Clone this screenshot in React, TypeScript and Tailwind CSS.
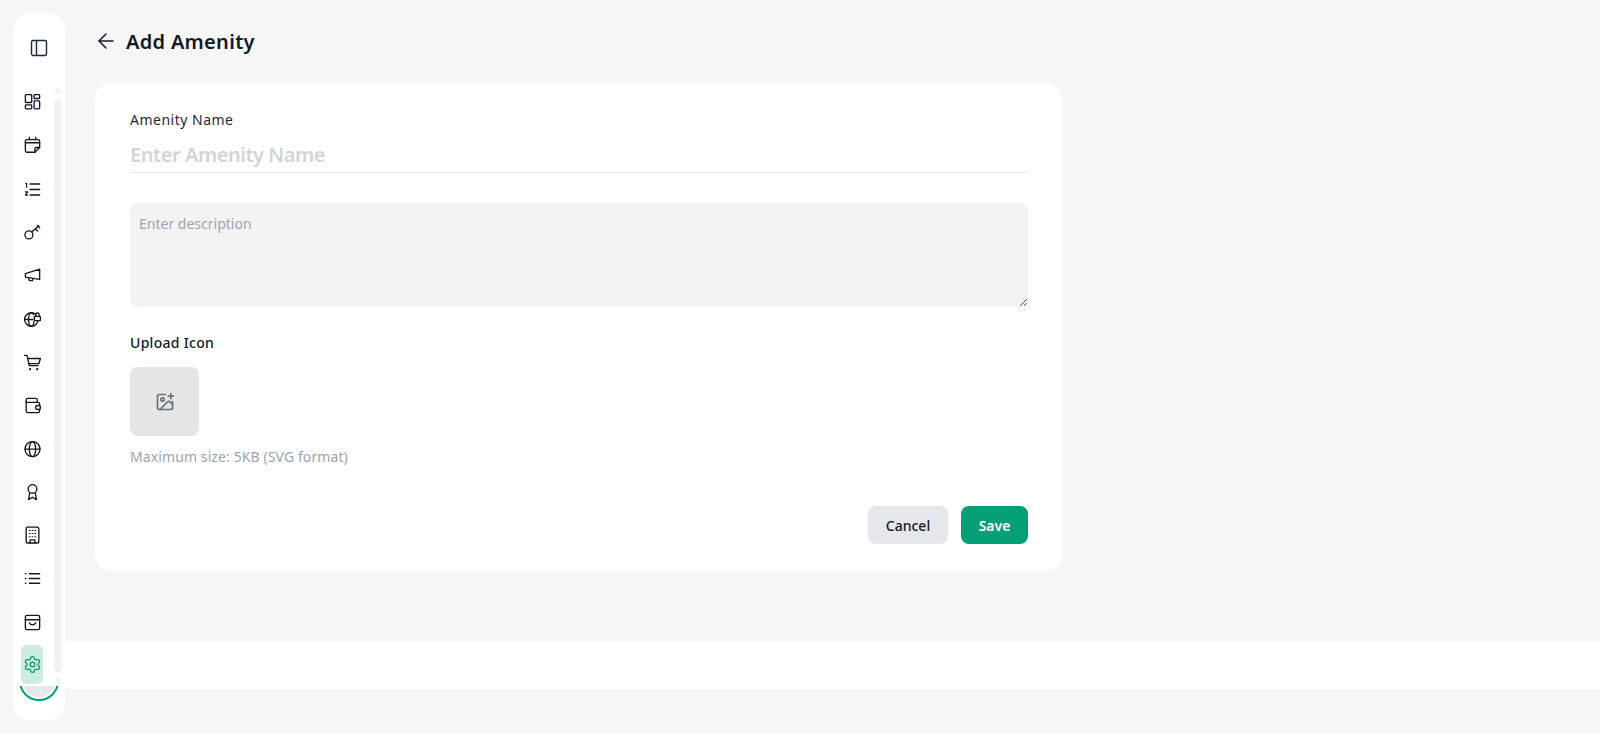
import React from "react";
import { ArrowLeft, Settings, ImagePlus } from "lucide-react";

const NavSvg = ({ children }: { children: React.ReactNode }) => (
  <svg
    viewBox="0 0 24 24"
    fill="none"
    stroke="#111827"
    strokeWidth={1.7}
    strokeLinecap="round"
    strokeLinejoin="round"
    className="h-[19px] w-[19px]"
  >
    {children}
  </svg>
);

const navIcons = [
  // dashboard
  <>
    <rect x="3" y="2" width="8" height="10" rx="1" />
    <rect x="3" y="15" width="8" height="5" rx="1" />
    <rect x="14" y="2" width="7" height="5" rx="1" />
    <rect x="14" y="10" width="7" height="10" rx="1" />
  </>,
  // calendar note
  <>
    <path d="M8 1.5v3M16 1.5v3" />
    <path d="M5 4.5h14a2 2 0 0 1 2 2v8l-6 6H5a2 2 0 0 1-2-2v-12a2 2 0 0 1 2-2z" />
    <path d="M21 14.5h-4a2 2 0 0 0-2 2v4" />
    <path d="M3 8.5h18" />
  </>,
  // numbered list
  <>
    <path d="M9 5h12M9 12h12M9 19h12" />
    <path d="M3.5 4.5l1-.5v5" strokeWidth={1.5} />
    <path d="M3 15h3l-3 4h3" strokeWidth={1.5} />
  </>,
  // key
  <>
    <circle cx="7.5" cy="15" r="5" />
    <path d="M11 11.5l9-8" />
    <path d="M16 7.5l2.5 2.5M18 3l3 3" />
  </>,
  // megaphone
  <>
    <path d="M3 9.5L21 4v13L3 14z" />
    <path d="M7 15l1 3.5h4l.6-2.5" />
  </>,
  // globe with lock
  <>
    <circle cx="10.5" cy="12" r="8.5" />
    <ellipse cx="10.5" cy="12" rx="3.5" ry="8.5" />
    <path d="M2 12h17" />
    <rect x="13" y="6" width="10" height="8" fill="#ffffff" stroke="none" />
    <rect x="14.5" y="8" width="7.5" height="5.5" rx="1" />
    <path d="M16 8V6a2.2 2.2 0 0 1 4.4 0v2" />
  </>,
  // cart
  <>
    <path d="M2 3h3l3 13h11" />
    <path d="M6 7h16l-2 6.5H7.5" />
    <circle cx="9" cy="20.5" r="0.6" />
    <circle cx="18" cy="20.5" r="0.6" />
  </>,
  // wallet
  <>
    <path d="M4 8V5a2 2 0 0 1 2-2h10a2 2 0 0 1 2 2v3" />
    <path d="M4 7v12a2 2 0 0 0 2 2h13a2 2 0 0 0 2-2V10a2 2 0 0 0-2-2H5" />
    <rect x="16" y="12" width="6" height="5" rx="2.5" fill="#ffffff" />
  </>,
  // globe
  <>
    <circle cx="12" cy="11.5" r="9.5" />
    <ellipse cx="12" cy="11.5" rx="4" ry="9.5" />
    <path d="M2.5 11.5h19" />
  </>,
  // award
  <>
    <circle cx="12" cy="7.5" r="5.5" />
    <path d="M8.5 12.5L7 21l5-3 5 3-1.5-8.5" />
  </>,
  // building
  <>
    <rect x="4" y="1.5" width="16" height="20" rx="2" />
    <path d="M8 5.5h1M11.5 5.5h1M15 5.5h1M8 9.5h1M11.5 9.5h1M15 9.5h1M8 13.5h1M11.5 13.5h1M15 13.5h1" strokeWidth={1.4} />
    <path d="M9 21.5v-4h6v4" />
  </>,
  // list
  <>
    <path d="M8 6h13M8 12h13M8 18h13" />
    <path d="M3 6h.5M3 12h.5M3 18h.5" />
  </>,
  // inbox box
  <>
    <rect x="3" y="3" width="18" height="18" rx="2" />
    <path d="M3 8.5h18" />
    <path d="M8 12.5c1 2 2.5 2.5 4 2.5s3-.5 4-2.5" />
  </>,
];

const SideBar = () => {
  return (
    <aside className="w-[52px] h-[707px] mt-[13px] ml-[13px] shrink-0 bg-white rounded-[16px] flex flex-col">
      <div className="h-[68px] pt-[2px] flex items-center justify-center shrink-0">
        <svg viewBox="0 0 24 24" fill="none" stroke="#1f2937" strokeWidth={1.7} strokeLinejoin="round" className="h-[20px] w-[20px]">
          <rect x="3" y="3" width="18" height="18" rx="2" />
          <path d="M9 3v18" />
        </svg>
      </div>
      <div className="relative z-10 flex bg-white h-[605px] w-[52px] shrink-0">
        <div className="w-[38px] flex flex-col items-center">
          {navIcons.map((icon, i) => (
            <div key={i} className="h-[43.3px] flex items-center justify-center shrink-0">
              <NavSvg>{icon}</NavSvg>
            </div>
          ))}
          <div className="h-[39px] w-[22px] mt-[1px] rounded-[6px] bg-[#ccece3] flex items-center justify-center shrink-0">
            <Settings className="h-[19px] w-[19px] text-[#059669]" strokeWidth={1.6} />
          </div>
        </div>
        <div className="w-[8px] ml-[3px] mt-[6px] flex flex-col items-center">
          <div className="h-0 w-0 border-x-[4px] border-b-[6px] border-x-transparent border-b-[#f1f2f4]"></div>
          <div className="w-[8px] h-[573px] mt-[6px] rounded-full bg-[#f1f2f4]"></div>
          <div className="h-0 w-0 mt-[6px] border-x-[4px] border-t-[6px] border-x-transparent border-t-[#f1f2f4]"></div>
        </div>
      </div>
      <div className="h-[40px] w-[40px] shrink-0 rounded-full bg-white p-[2px] border-2 border-[#059f75] mx-auto -mt-[25px]">
        <div className="h-full w-full rounded-full bg-[#e5e7eb]"></div>
      </div>
    </aside>
  );
};

export default function App() {
  return (
    <div className="flex h-[733px] w-full overflow-hidden bg-[#f6f6f6] font-['Noto_Sans',sans-serif]">
      <SideBar />
      <main className="flex-1 flex flex-col">
        <div className="pl-[30px] pt-[24px]">
          <div className="flex items-center h-[36px]">
            <ArrowLeft className="h-[24px] w-[24px] text-[#111827] -ml-[1px] -mt-[2px] mr-[8px]" strokeWidth={1.5} />
            <h1 className="text-[20px] font-semibold tracking-[0.3px] text-[#111827]">Add Amenity</h1>
          </div>
          <div className="mt-[23px] w-[967px] h-[488px] bg-white rounded-[16px] pl-[35px] pr-[34px] pt-[27px]">
            <label className="block text-[14px] leading-[20px] tracking-[0.5px] text-[#1f2937]">Amenity Name</label>
            <input
              placeholder="Enter Amenity Name"
              className="w-full h-[38px] mt-[5px] pt-[2px] border-b border-[#e5e7eb] text-[20px] font-semibold tracking-[-0.45px] outline-none placeholder:text-[#d1d5db]"
            />
            <textarea
              placeholder="Enter description"
              className="block w-full h-[104px] mt-[30px] rounded-[8px] bg-[#f3f3f3] px-[9px] py-[10px] text-[14px] outline-none placeholder:text-[#9ca3af]"
            />
            <p className="mt-[26px] text-[14px] leading-[20px] font-medium tracking-[0.3px] text-[#111827]">Upload Icon</p>
            <div className="mt-[14px] h-[69px] w-[69px] rounded-[8px] bg-[#e5e5e5] flex items-center justify-center">
              <ImagePlus className="h-[20px] w-[20px] text-[#6b7280]" strokeWidth={2} />
            </div>
            <p className="mt-[11px] text-[14px] leading-[20px] tracking-[0.1px] text-[#9ca3af]">Maximum size: 5KB (SVG format)</p>
            <div className="mt-[39px] flex justify-end gap-[13px]">
              <button className="h-[38px] w-[80px] rounded-[8px] bg-[#e5e7eb] text-[14px] font-medium text-[#111827]">Cancel</button>
              <button className="h-[38px] w-[67px] rounded-[8px] bg-[#059f75] text-[14px] font-semibold text-white">Save</button>
            </div>
          </div>
        </div>
        <div className="mt-[70px] h-[48px] bg-white"></div>
      </main>
    </div>
  );
}
